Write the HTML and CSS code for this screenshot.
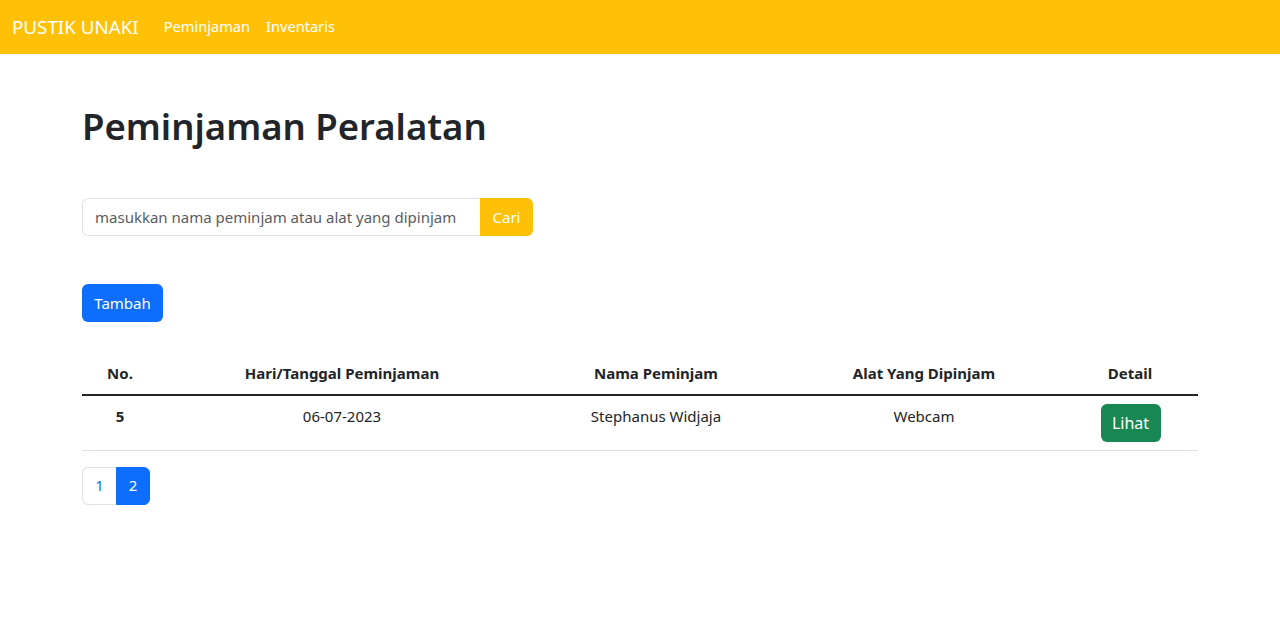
FILE: index.html
```html
<!DOCTYPE html>
<html lang="id">
<head>
<meta charset="utf-8">
<title>Peminjaman Peralatan</title>
<link rel="stylesheet" href="styles.css">
</head>
<body>
<nav class="navbar">
  <a class="brand" href="#">PUSTIK UNAKI</a>
  <a class="nav-link" href="#">Peminjaman</a>
  <a class="nav-link" href="#">Inventaris</a>
</nav>
<main class="container">
  <h1 class="title">Peminjaman Peralatan</h1>
  <form class="search">
    <input class="search-input" type="text" placeholder="masukkan nama peminjam atau alat yang dipinjam">
    <button class="btn btn-warning" type="button">Cari</button>
  </form>
  <div class="actions">
    <a class="btn btn-primary" href="#">Tambah</a>
  </div>
  <table class="table">
    <thead>
      <tr>
        <th class="c-no">No.</th>
        <th class="c-date">Hari/Tanggal Peminjaman</th>
        <th class="c-name">Nama Peminjam</th>
        <th class="c-tool">Alat Yang Dipinjam</th>
        <th class="c-detail">Detail</th>
      </tr>
    </thead>
    <tbody>
      <tr>
        <th>5</th>
        <td>06-07-2023</td>
        <td>Stephanus Widjaja</td>
        <td>Webcam</td>
        <td><a class="btn btn-success" href="#">Lihat</a></td>
      </tr>
    </tbody>
  </table>
  <ul class="pagination">
    <li class="page-item"><a class="page-link" href="#">1</a></li>
    <li class="page-item active"><a class="page-link" href="#">2</a></li>
  </ul>
</main>
</body>
</html>
```
FILE: styles.css
```css
* { box-sizing: border-box; }
body {
  margin: 0;
  font-family: "Noto Sans", "Open Sans", sans-serif;
  font-size: 16px;
  line-height: 1.5;
  color: #212529;
  background: #fff;
}
a { text-decoration: none; }
.navbar {
  background: #ffc107;
  height: 54px;
  display: flex;
  align-items: center;
  padding: 0 12px;
}
.brand {
  color: #fff;
  font-size: 18.8px;
  margin-right: 17px;
}
.nav-link {
  color: #fff;
  font-size: 14.6px;
  padding: 0 8px;
}
.container {
  width: 1140px;
  margin: 0 auto;
  padding: 48px 12px 0;
}
.title {
  font-size: 36.5px;
  font-weight: 600;
  line-height: 48px;
  margin: 0 0 48px;
}
.search {
  display: flex;
  width: 451px;
  height: 38px;
}
.search-input {
  flex: 1;
  min-width: 0;
  border: 1px solid #dee2e6;
  border-right: 0;
  border-radius: 6px 0 0 6px;
  padding: 6px 12px;
  font: inherit;
  font-size: 15px;
  color: #212529;
}
.search-input::placeholder { color: #595c5f; }
.search .btn { border-radius: 0 6px 6px 0; }
.btn {
  display: inline-flex;
  align-items: center;
  justify-content: center;
  height: 38px;
  padding: 0 12px;
  border: 0;
  border-radius: 6px;
  font: inherit;
  font-size: 15px;
  color: #fff;
}
.btn-warning { background: #ffc107; color: #fff; width: 53px; }
.btn-primary { background: #0d6efd; width: 81px; }
.btn-success { background: #198754; width: 60px; font-size: 16px; }
.actions { margin-top: 48px; }
.table {
  width: 100%;
  border-collapse: collapse;
  margin-top: 34px;
  font-size: 15px;
}
.table th, .table td {
  text-align: center;
  vertical-align: top;
  padding: 8px;
}
.table thead th {
  font-weight: 700;
  border-bottom: 2px solid #212529;
  padding: 6px 8px 9px;
}
.table tbody th, .table tbody td {
  border-bottom: 1px solid #dee2e6;
}
.table tbody td:not(:last-child), .table tbody th { padding-top: 9px; }
.table tbody td:last-child { padding-left: 9px; }
.c-no { width: 76px; }
.c-date { width: 368px; }
.c-name { width: 260px; }
.c-tool { width: 276px; }
.c-detail { width: 136px; }
.pagination {
  list-style: none;
  display: flex;
  margin: 16px 0 0;
  padding: 0;
}
.page-link {
  display: flex;
  align-items: center;
  justify-content: center;
  width: 34px;
  height: 38px;
  border: 1px solid #dee2e6;
  color: #0d6efd;
  font-size: 15px;
}
.page-item:first-child .page-link { border-radius: 6px 0 0 6px; border-right: 0; }
.page-item:last-child .page-link { border-radius: 0 6px 6px 0; }
.page-item.active .page-link {
  background: #0d6efd;
  border-color: #0d6efd;
  color: #fff;
}
```
